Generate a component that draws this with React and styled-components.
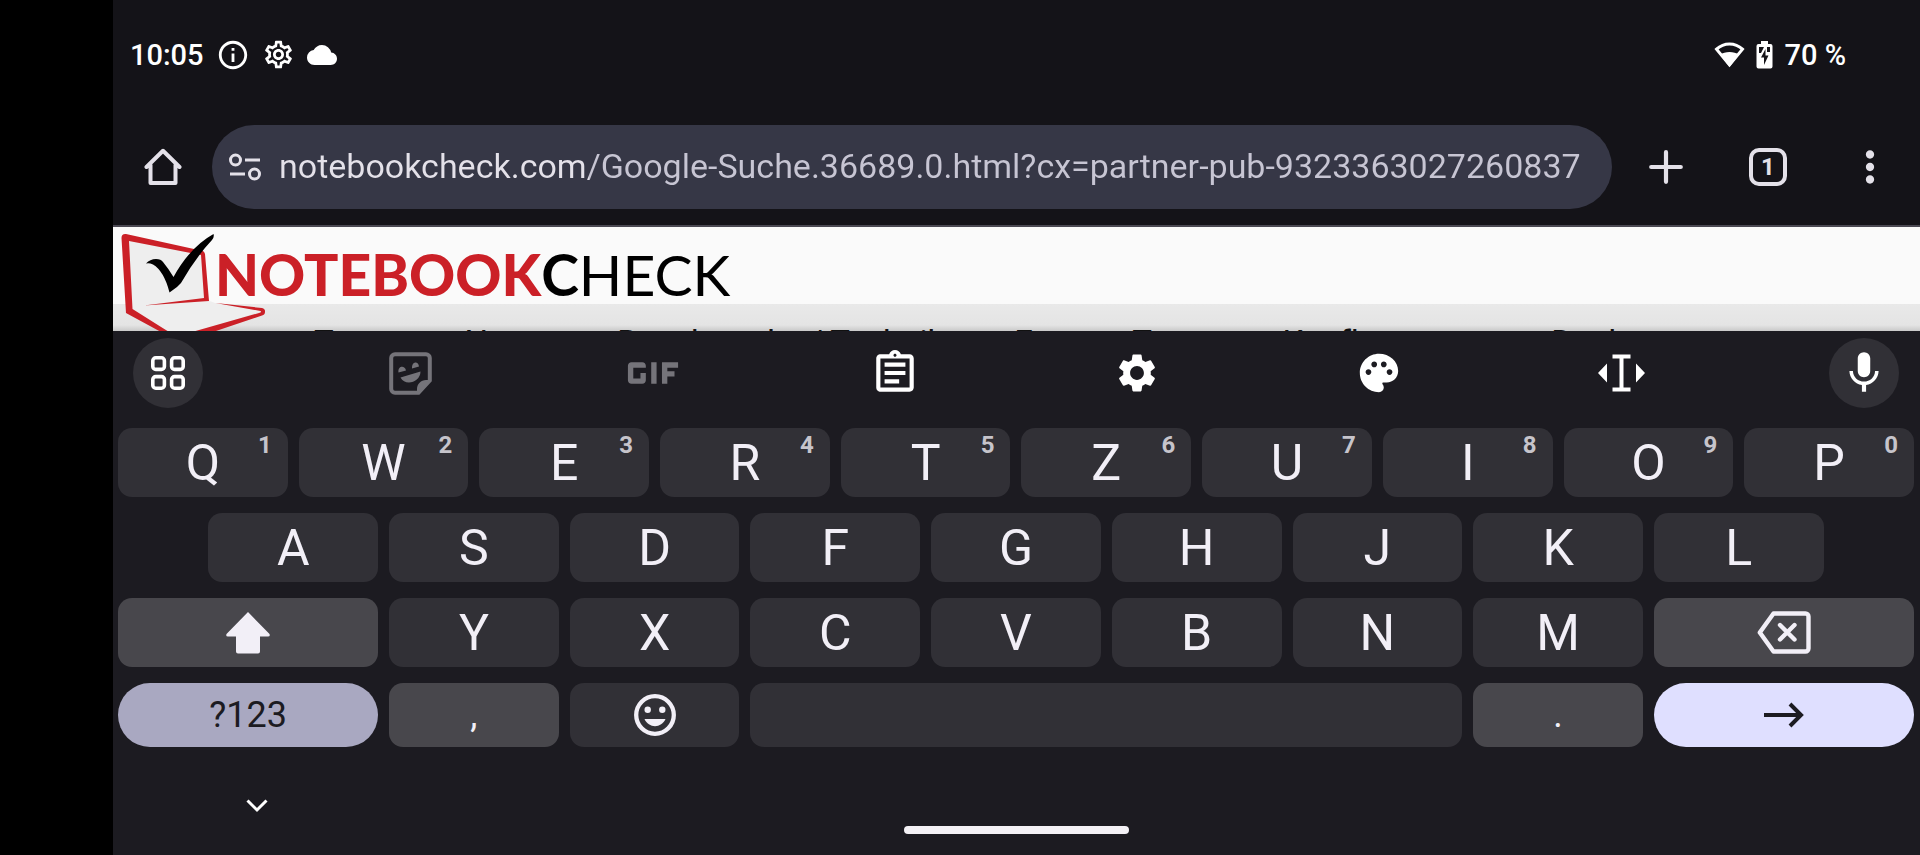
import styled, { createGlobalStyle, css } from "styled-components";
import {
  MdCloud,
  MdGif,
  MdInfoOutline,
  MdMic,
  MdMoreVert,
  MdOutlineAssignment,
  MdOutlineSettings,
  MdPalette,
  MdSettings,
} from "react-icons/md";

const GlobalStyle = createGlobalStyle`
  * {
    box-sizing: border-box;
  }
  body {
    margin: 0;
    background-color: #000;
    font-family: Roboto, "Liberation Sans", sans-serif;
  }
  button {
    border: none;
    padding: 0;
    background: none;
    color: inherit;
    font-family: inherit;
    cursor: pointer;
  }
  svg {
    display: block;
    flex: none;
  }
`;

const Device = styled.div`
  min-height: 100vh;
  padding-left: 113px;
  display: flex;
  background-color: #000;
`;

const Screen = styled.div`
  flex: 1;
  min-width: 0;
  display: flex;
  flex-direction: column;
  background-color: #141318;
`;

const StatusBar = styled.header`
  height: 109px;
  padding: 0 74px 0 17px;
  display: flex;
  align-items: center;
  justify-content: space-between;
  color: #fff;
  font-size: 29px;
  font-weight: 500;
`;

const StatusGroup = styled.div`
  display: flex;
  align-items: center;
  gap: ${({ $gap }) => $gap}px;
`;

const Toolbar = styled.div`
  height: 116px;
  display: flex;
  align-items: center;
  gap: 2px;
  color: #e4e1e9;
`;

const ToolButton = styled.button`
  flex: none;
  width: 100px;
  height: 84px;
  display: flex;
  align-items: center;
  justify-content: center;
`;

const AddressBar = styled.form`
  flex: 1;
  min-width: 0;
  height: 84px;
  margin: 0 2px 0 -3px;
  padding: 0 12px 0 17px;
  display: flex;
  align-items: center;
  gap: 18px;
  border-radius: 42px;
  background-color: #363746;
`;

const AddressInput = styled.input`
  flex: 1;
  min-width: 0;
  padding: 0 0 2px;
  border: none;
  outline: none;
  font-family: Roboto, sans-serif;
  font-size: 34px;
  line-height: 44px;
  /* the host is brighter than the path */
  background: linear-gradient(90deg, #e4e1e9 310px, #c7c5d3 310px);
  background-clip: text;
  -webkit-text-fill-color: transparent;
`;

const TabCount = styled.span`
  width: 38px;
  height: 38px;
  display: flex;
  align-items: center;
  justify-content: center;
  border: 4px solid #e4e1e9;
  border-radius: 10px;
  font-size: 24px;
  font-weight: 700;
`;

const WebPage = styled.main`
  height: 106px;
  overflow: hidden;
  border-top: 2px solid #4a4852;
  background: linear-gradient(
    #fafafa 77px,
    #e9e9e9 77px,
    #e4e4e4 98px,
    #c9c9c9 104px
  );
`;

const Brand = styled.a`
  height: 100px;
  padding-left: 7px;
  display: flex;
  align-items: flex-start;
  text-decoration: none;
`;

const Wordmark = styled.span`
  margin: 19px 0 0 -52px;
  font-family: Lato, sans-serif;
  font-size: 57px;
  line-height: 56px;
  font-weight: 400;
  color: #000;
`;

const WordmarkStrong = styled.span`
  font-weight: 900;
  color: #cb2027;
`;

const WordmarkInitial = styled.span`
  font-weight: 700;
`;

const SiteNav = styled.nav`
  padding-left: 201px;
  display: flex;
  gap: 70px;
  white-space: nowrap;
`;

const SiteLink = styled.a`
  color: #111;
  font-size: 33px;
  line-height: 32px;
  text-decoration: none;
`;

const Keyboard = styled.section`
  flex: 1;
  display: flex;
  flex-direction: column;
  background-color: #1c1b21;
  color: #f2eff7;
`;

const Shortcuts = styled.div`
  padding: 7px 21px 20px 20px;
  display: flex;
  justify-content: space-between;
  color: #fff;
`;

const Shortcut = styled.button`
  width: 70px;
  height: 70px;
  display: flex;
  align-items: center;
  justify-content: center;
  border-radius: 50%;
  background-color: ${({ $filled }) => ($filled ? "#313036" : "transparent")};
  color: ${({ $dim }) => ($dim ? "#75747a" : "inherit")};
`;

const Keys = styled.div`
  padding: 0 6px 0 5px;
  display: grid;
  grid-template-columns: repeat(20, minmax(0, 1fr));
  grid-template-rows: 69px 69px 69px 64px;
  gap: 16px 11px;
`;

const tones = {
  letter: css`
    background-color: #313036;
  `,
  side: css`
    background-color: #48474c;
    font-size: 36px;
  `,
  symbols: css`
    background-color: #a9a8c1;
    color: #1c1b21;
    border-radius: 32px;
    font-size: 36px;
  `,
  enter: css`
    background-color: #dfdfff;
    color: #1c1b21;
    border-radius: 32px;
  `,
};

const Key = styled.button`
  position: relative;
  grid-column: ${({ $start }) => $start || "auto"} / span
    ${({ $span }) => $span || 2};
  display: flex;
  align-items: center;
  justify-content: center;
  border-radius: 14px;
  font-size: 50px;
  line-height: 60px;
  ${({ $tone }) => tones[$tone || "letter"]}
`;

const Hint = styled.span`
  position: absolute;
  top: 3px;
  right: 16px;
  color: #c6c4cb;
  font-size: 24px;
  line-height: 28px;
  font-weight: 700;
`;

const GestureBar = styled.footer`
  flex: 1;
  display: grid;
  grid-template-columns: 1fr auto 1fr;
  align-items: end;
  padding-bottom: 21px;
`;

const HideButton = styled.button`
  width: 44px;
  height: 44px;
  margin: 0 0 6px 122px;
  display: flex;
  align-items: center;
  justify-content: center;
  color: #fff;
`;

const HomeHandle = styled.div`
  width: 225px;
  height: 8px;
  border-radius: 4px;
  background-color: #f4f1f6;
`;

const WifiIcon = () => (
  <svg width="31" height="27" viewBox="0 0 31 27">
    <path
      d="M2.500 8.200C10 1.200 21 1.200 28.500 8.200L15.500 24Z"
      fill="none"
      stroke="currentColor"
      strokeWidth="3"
    />
    <path d="M6 13.500C11 10 20 10 25 13.500L15.500 26Z" fill="currentColor" />
  </svg>
);

const BatteryIcon = () => (
  <svg width="17" height="28" viewBox="0 0 17 28">
    <path
      d="M5 0h7v3h2.500a2 2 0 0 1 2 2v20.500a2 2 0 0 1-2 2h-12a2 2 0 0 1-2-2V5a2 2 0 0 1 2-2H5z"
      fill="currentColor"
    />
    <path d="M3 6h5L5 12H3zM11 6h3v5h-3z" fill="#141318" />
    <path d="M9.500 8L5 16.500h3V24l4.500-9.500h-3z" fill="#141318" />
  </svg>
);

const HomeIcon = () => (
  <svg width="38" height="38" viewBox="0 0 38 38">
    <path
      d="M2.500 19L19 2.800L35.500 19M6.500 17v18h25V17"
      fill="none"
      stroke="currentColor"
      strokeWidth="4"
      strokeLinecap="round"
      strokeLinejoin="round"
    />
  </svg>
);

const TuneIcon = () => (
  <svg width="32" height="28" viewBox="0 0 32 28">
    <g fill="none" stroke="currentColor" strokeWidth="3">
      <circle cx="6.500" cy="7" r="5" />
      <path d="M16 7h15M1 21h15" />
      <circle cx="25.500" cy="21" r="5" />
    </g>
  </svg>
);

const PlusIcon = () => (
  <svg width="34" height="34" viewBox="0 0 34 34">
    <path
      d="M17 2.200v29.600M2.200 17h29.600"
      stroke="currentColor"
      strokeWidth="4.200"
      strokeLinecap="round"
    />
  </svg>
);

const LaptopLogo = () => (
  <svg width="147" height="104" viewBox="120 227 147 104">
    <path
      d="M126 238L203 254L207 300L215 303L262 311L200 331H168L130 311Z"
      fill="#eeeeee"
    />
    <path
      fill="#cb2027"
      d="M126 234L203 251Q204.500 252 205 254L209 301L144 305.500L204 298L201 255L129 241L132.500 309L169 332H161L126 313L121.500 238Q121.500 233.500 126 234Z"
      fillRule="evenodd"
      stroke="none"
    />
    <path
      fill="#cb2027"
      d="M215.500 303L262 308Q265.500 309 265 312Q265 314.500 262 315.500L213 332H192L259 313Q262 312 260.500 311Z"
    />
    <path
      fill="#000"
      d="M146 263.500Q150 259 156 259Q161 259 163 262Q168 268 173.500 277Q190 247 213.500 234Q214.500 237 212 240Q196 257 181 283L177 287L169.500 292.500Q164 271 153 264.500Q149 262.500 146 263.500Z"
    />
  </svg>
);

const AppsIcon = () => (
  <svg width="34" height="34" viewBox="0 0 34 34">
    <g fill="none" stroke="currentColor" strokeWidth="3.600">
      <rect x="1.800" y="1.800" width="11.600" height="11.600" rx="3" />
      <rect x="20.600" y="1.800" width="11.600" height="11.600" rx="3" />
      <rect x="1.800" y="20.600" width="11.600" height="11.600" rx="3" />
      <rect x="20.600" y="20.600" width="11.600" height="11.600" rx="3" />
    </g>
  </svg>
);

const StickerIcon = () => (
  <svg width="43" height="43" viewBox="0 0 43 43">
    <path
      d="M6 2.200h31a3.800 3.800 0 0 1 3.800 3.800v22.500L29.500 40.800H6A3.800 3.800 0 0 1 2.200 37V6A3.800 3.800 0 0 1 6 2.200z"
      fill="none"
      stroke="currentColor"
      strokeWidth="4"
    />
    <path
      d="M28 41v-4c0-5 4-9 9-9h5L30 42zM9.500 20.500c-1-7 6.500-7.500 7.500-2zM23 16.500c-.5-7.500 6.500-8 7-2zM11.500 25.500l20-6c0 11-15.500 15-20 6z"
      fill="currentColor"
    />
  </svg>
);

const CursorIcon = () => (
  <svg width="47" height="42" viewBox="0 0 47 42">
    <path d="M0 21l9-9.500v19zM47 21l-9-9.500v19z" fill="currentColor" />
    <path
      d="M14.500 4.500h18M14.500 37.500h18M23.500 4.500v33"
      stroke="currentColor"
      strokeWidth="4"
    />
  </svg>
);

const ShiftIcon = () => (
  <svg width="44" height="42" viewBox="0 0 44 42">
    <path
      d="M22 0L43.500 22q1 2.500-1.500 2.500h-8V39.500q0 2-2 2H12q-2 0-2-2V24.500H2Q-.5 24.500.500 22z"
      fill="currentColor"
    />
  </svg>
);

const BackspaceIcon = () => (
  <svg width="54" height="43" viewBox="0 0 54 43">
    <g
      fill="none"
      stroke="currentColor"
      strokeWidth="4.400"
      strokeLinecap="round"
      strokeLinejoin="round"
    >
      <path d="M16.500 2.500H48.500a3 3 0 0 1 3 3v32a3 3 0 0 1-3 3h-32L2.800 21.500z" />
      <path d="M23 14l14.500 14.500M37.500 14L23 28.500" />
    </g>
  </svg>
);

const EmojiIcon = () => (
  <svg width="42" height="42" viewBox="0 0 42 42">
    <circle cx="21" cy="21" r="18.800" fill="none" stroke="currentColor" strokeWidth="4.300" />
    <circle cx="13.700" cy="15.800" r="3.200" fill="currentColor" />
    <circle cx="28.300" cy="15.800" r="3.200" fill="currentColor" />
    <path d="M10.500 25h21c-4 9.500-17 9.500-21 0z" fill="currentColor" />
  </svg>
);

const EnterIcon = () => (
  <svg width="40" height="26" viewBox="0 0 40 26">
    <path
      d="M0 13h37M26 2l11 11L26 24"
      fill="none"
      stroke="currentColor"
      strokeWidth="4"
    />
  </svg>
);

const ChevronIcon = () => (
  <svg width="22" height="14" viewBox="0 0 22 14">
    <path d="M1.500 1.500L11 11L20.500 1.500" fill="none" stroke="currentColor" strokeWidth="3" />
  </svg>
);

const siteLinks = [
  "Tests",
  "News",
  "Benchmarks / Technik",
  "Externe Tests",
  "Kaufberatung",
  "Deals",
];

const shortcuts = [
  { label: "Menu", icon: <AppsIcon />, filled: true },
  { label: "Stickers", icon: <StickerIcon />, dim: true },
  { label: "GIF", icon: <MdGif size={86} />, dim: true },
  { label: "Clipboard", icon: <MdOutlineAssignment size={50} /> },
  { label: "Settings", icon: <MdSettings size={46} /> },
  { label: "Themes", icon: <MdPalette size={46} /> },
  { label: "Text editing", icon: <CursorIcon /> },
  { label: "Voice input", icon: <MdMic size={50} />, filled: true },
];

const topRow = "QWERTZUIOP".split("");
const homeRow = "ASDFGHJKL".split("");
const bottomRow = "YXCVBNM".split("");

const App = () => {
  return (
    <Device>
      <GlobalStyle />
      <Screen>
        <StatusBar>
          <StatusGroup $gap={12}>
            <span>10:05</span>
            <MdInfoOutline size={34} />
            <MdOutlineSettings size={33} />
            <MdCloud size={30} />
          </StatusGroup>
          <StatusGroup $gap={11}>
            <WifiIcon />
            <BatteryIcon />
            <span>70 %</span>
          </StatusGroup>
        </StatusBar>

        <Toolbar>
          <ToolButton aria-label="Home">
            <HomeIcon />
          </ToolButton>
          <AddressBar>
            <TuneIcon />
            <AddressInput
              aria-label="Address"
              defaultValue="notebookcheck.com/Google-Suche.36689.0.html?cx=partner-pub-9323363027260837"
            />
          </AddressBar>
          <ToolButton aria-label="New tab">
            <PlusIcon />
          </ToolButton>
          <ToolButton aria-label="Tabs">
            <TabCount>1</TabCount>
          </ToolButton>
          <ToolButton aria-label="More">
            <MdMoreVert size={50} />
          </ToolButton>
        </Toolbar>

        <WebPage>
          <Brand href="#">
            <LaptopLogo />
            <Wordmark>
              <WordmarkStrong>NOTEBOOK</WordmarkStrong>
              <WordmarkInitial>C</WordmarkInitial>HECK
            </Wordmark>
          </Brand>
          <SiteNav>
            {siteLinks.map((link) => (
              <SiteLink key={link} href="#">
                {link}
              </SiteLink>
            ))}
          </SiteNav>
        </WebPage>

        <Keyboard>
          <Shortcuts>
            {shortcuts.map(({ label, icon, filled, dim }) => (
              <Shortcut key={label} aria-label={label} $filled={filled} $dim={dim}>
                {icon}
              </Shortcut>
            ))}
          </Shortcuts>
          <Keys>
            {topRow.map((letter, i) => (
              <Key key={letter}>
                {letter}
                <Hint>{(i + 1) % 10}</Hint>
              </Key>
            ))}
            {homeRow.map((letter, i) => (
              <Key key={letter} $start={i === 0 ? 2 : undefined}>
                {letter}
              </Key>
            ))}
            <Key $tone="side" $start={1} $span={3} aria-label="Shift">
              <ShiftIcon />
            </Key>
            {bottomRow.map((letter) => (
              <Key key={letter}>{letter}</Key>
            ))}
            <Key $tone="side" $span={3} aria-label="Backspace">
              <BackspaceIcon />
            </Key>
            <Key $tone="symbols" $span={3}>
              ?123
            </Key>
            <Key $tone="side">,</Key>
            <Key aria-label="Emoji">
              <EmojiIcon />
            </Key>
            <Key $span={8} aria-label="Space" />
            <Key $tone="side">.</Key>
            <Key $tone="enter" $span={3} aria-label="Go">
              <EnterIcon />
            </Key>
          </Keys>
          <GestureBar>
            <HideButton aria-label="Hide keyboard">
              <ChevronIcon />
            </HideButton>
            <HomeHandle />
          </GestureBar>
        </Keyboard>
      </Screen>
    </Device>
  );
};

export default App;
